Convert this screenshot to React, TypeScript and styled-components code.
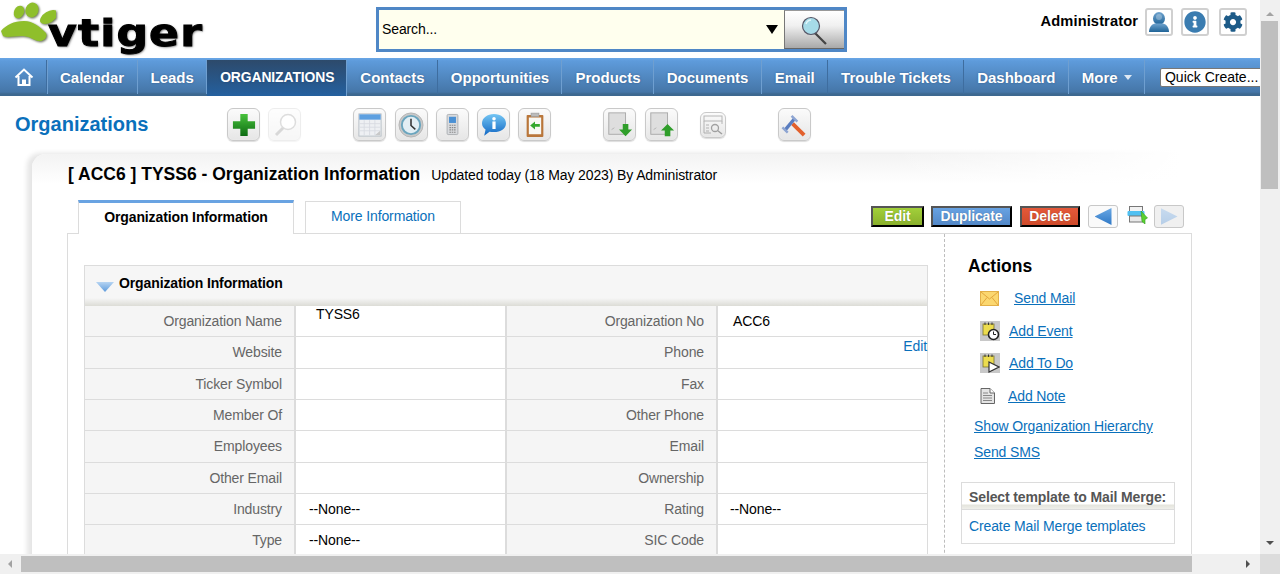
import React from 'react';
import styled, { createGlobalStyle } from 'styled-components';
import { FaCog, FaInfoCircle } from 'react-icons/fa';

const GlobalStyle = createGlobalStyle`
  html, body { margin: 0; padding: 0; height: 100%; overflow: hidden; background: #fff; }
  body { font-family: "Liberation Sans", Arial, sans-serif; font-size: 14px; letter-spacing: -0.12px; color: #000; }
  * { box-sizing: border-box; }
`;

const Shell = styled.div`
  display: grid;
  grid-template-columns: 1260px 20px;
  grid-template-rows: 554px 20px;
  width: 1280px;
  height: 574px;
  overflow: hidden;
`;

const Viewport = styled.div`
  overflow: hidden;
  background: #fff;
`;

const VTrack = styled.div`
  background: #f0f0f0;
  display: flex;
  flex-direction: column;
  align-items: center;
  padding: 0 2px 0 1px;
  position: relative;
`;

const VThumb = styled.div`
  width: 100%;
  height: 168px;
  background: #bfbfbf;
  margin-top: 5px;
`;

const HTrack = styled.div`
  background: #f0f0f0;
  display: flex;
  align-items: center;
  padding: 2px 0;
`;

const HThumb = styled.div`
  width: 1171px;
  height: 16px;
  background: #bfbfbf;
  margin-left: 9px;
`;

const Corner = styled.div`
  background: #dcdcdc;
`;

const Arrow = styled.span<{ $dir: 'up' | 'down' | 'left' | 'right'; $dark?: boolean }>`
  flex: none;
  width: 0;
  height: 0;
  border-style: solid;
  ${p => {
    const c = p.$dark ? '#505050' : '#a3a3a3';
    if (p.$dir === 'up') return `border-width: 0 4px 4px; border-color: transparent transparent ${c}; margin-top: 12px;`;
    if (p.$dir === 'down') return `border-width: 4px 4px 0; border-color: ${c} transparent transparent; position: absolute; bottom: 9px;`;
    if (p.$dir === 'left') return `border-width: 4px 4px 4px 0; border-color: transparent ${c} transparent transparent; margin-left: 8px;`;
    return `border-width: 4px 0 4px 4px; border-color: transparent transparent transparent ${c}; margin-left: 54px;`;
  }}
`;

const Header = styled.header`
  display: flex;
  height: 58px;
  padding-right: 13px;
`;

const Logo = styled.div`
  width: 376px;
  flex: none;
  display: flex;
  align-items: flex-start;
`;

const PawSvg = styled.svg`
  flex: none;
  filter: drop-shadow(1px 1px 1px rgba(40, 50, 20, 0.7)) blur(0.3px);
`;

const LogoWord = styled.span`
  font-family: "DejaVu Sans", sans-serif;
  font-weight: 700;
  font-size: 38px;
  line-height: 46px;
  letter-spacing: 1px;
  margin: 10px 0 0 -8px;
  color: #000;
  -webkit-text-stroke: 1px #000;
  text-shadow: 1px 1px 2px rgba(0, 0, 0, 0.55);
  transform: scaleX(1.16);
  transform-origin: left center;
`;

const SearchBox = styled.div`
  width: 471px;
  height: 45px;
  margin-top: 7px;
  border: 3px solid #4f87c6;
  background: #ffffee;
  display: flex;
  align-items: center;
`;

const SearchLabel = styled.span`
  flex: 1;
  padding: 0 0 1px 3px;
`;

const SearchCaret = styled.span`
  width: 0;
  height: 0;
  border-style: solid;
  border-width: 9px 6.5px 0;
  border-color: #000 transparent transparent;
  margin-right: 6px;
  margin-top: -1px;
`;

const SearchButton = styled.div`
  width: 60px;
  height: 39px;
  border-left: 1px solid #777;
  border-top: 1px solid #999;
  border-bottom: 1px solid #666;
  background: linear-gradient(#ffffff, #f0f0f0 40%, #a9a9a9);
  display: flex;
  align-items: center;
  justify-content: center;
`;

const UserArea = styled.div`
  margin-left: auto;
  display: flex;
  align-items: flex-start;
  padding-top: 8px;
`;

const UserName = styled.span`
  font-weight: 700;
  font-size: 14.67px;
  line-height: 26px;
  margin-right: 7px;
  letter-spacing: 0.1px;
`;

const UserIcon = styled.div<{ $gap?: number }>`
  width: 28px;
  height: 28px;
  border: 2px solid #d0d0d0;
  border-radius: 3px;
  margin-left: ${p => p.$gap ?? 0}px;
  display: flex;
  align-items: center;
  justify-content: center;
  background: #fff;
`;

const Nav = styled.nav`
  height: 38px;
  display: flex;
  align-items: stretch;
  overflow: hidden;
  background: linear-gradient(#69a6e6 0, #5e9bdb 3px, #4576a8 34px, #3d6890 36px, #3d6890 38px);
  padding-top: 2px;
  padding-bottom: 2px;
`;

const NavItem = styled.a<{ $active?: boolean; $dark?: boolean; $wide?: number }>`
  flex: none;
  display: flex;
  align-items: center;
  justify-content: center;
  padding: 0 12.3px 0 13px;
  ${p => p.$wide ? `width: ${p.$wide}px; padding: 0 0 0 1px; box-shadow: 1px 0 0 #6f9fd0;` : ''}
  font-weight: 700;
  font-size: 15px;
  letter-spacing: 0;
  color: #fff;
  text-shadow: 0 0 2px rgba(30, 60, 100, 0.55);
  border-right: 1px solid ${p => (p.$dark ? '#3e6d9f' : '#6f9fd0')};
  ${p => p.$active ? `
    background: linear-gradient(#2d4a6b, #24609f);
    margin-bottom: -2px;
    padding: 0 12px 2px 13px;
    font-size: 13.9px;
    letter-spacing: -0.1px;
    border-right-color: #6f9fd0;
  ` : ''}
`;

const MoreCaret = styled.span`
  width: 0;
  height: 0;
  margin-left: 6px;
  border-style: solid;
  border-width: 5px 4.5px 0;
  border-color: #dfe9f4 transparent transparent;
`;

const QuickCreate = styled.div`
  flex: none;
  margin: 8px 0 0 15px;
  width: 110px;
  height: 19px;
  background: #fff;
  border: 1px solid #777;
  border-radius: 2px;
  letter-spacing: 0;
  line-height: 17px;
  padding-left: 4px;
  white-space: nowrap;
`;

const TitleBar = styled.div`
  display: flex;
  align-items: center;
  height: 59px;
  padding: 0 0 0 15px;
`;

const ModuleTitle = styled.h1`
  margin: 0;
  width: 212px;
  flex: none;
  font-size: 20px;
  font-weight: 700;
  letter-spacing: 0;
  color: #0a70bb;
  position: relative;
  top: -1px;
`;

const Toolbar = styled.div`
  display: flex;
  gap: 52px;
  margin-top: -2px;
`;

const ToolGroup = styled.div`
  display: flex;
  align-items: center;
  gap: 8.25px;
`;

const ToolButton = styled.div<{ $faded?: boolean; $small?: boolean }>`
  width: ${p => (p.$small ? 26 : 33)}px;
  height: ${p => (p.$small ? 26 : 33)}px;
  ${p => (p.$small ? 'margin-left: 14px;' : '')}
  border: 1px solid #c9c9c9;
  border-radius: 6px;
  background: linear-gradient(#fbfbfb, #e6e6e6);
  box-shadow: inset 0 0 1px #fff, 0 1px 1px #ddd;
  display: flex;
  align-items: center;
  justify-content: center;
  opacity: ${p => (p.$faded ? 0.32 : 1)};

  svg {
    filter: blur(0.45px);
  }
`;

const Card = styled.section`
  position: relative;
  margin-left: 32px;
  width: 1190px;
  height: 500px;
  margin-top: -1px;
  padding: 0 0 0 35px;
  border-top-left-radius: 14px;
  background: linear-gradient(#f3f3f3, #fff 30px);
  box-shadow: -6px -2px 5px -1px #e6e6e6;
  display: flex;
  flex-direction: column;

  &::before {
    content: '';
    position: absolute;
    top: -10px;
    right: -10px;
    width: 340px;
    height: 44px;
    background: linear-gradient(to right, rgba(255, 255, 255, 0), #fff 85%);
  }
`;

const RecordTitle = styled.div`
  display: flex;
  align-items: baseline;
  height: 46px;
  padding: 10px 0 0 1px;
  flex: none;
`;

const RecordName = styled.h2`
  margin: 0;
  font-size: 17.5px;
  font-weight: 700;
  letter-spacing: 0;
`;

const RecordMeta = styled.span`
  margin-left: 11px;
  letter-spacing: -0.12px;
`;

const TabRow = styled.div`
  display: flex;
  align-items: flex-end;
  justify-content: space-between;
  padding: 0 8px 0 11px;
  width: 1125px;
  height: 34px;
  flex: none;
  position: relative;
  z-index: 1;
  margin-bottom: -1px;
`;

const Tabs = styled.div`
  display: flex;
  gap: 11px;
  align-items: flex-end;
`;

const Tab = styled.div<{ $active?: boolean }>`
  height: ${p => (p.$active ? 34 : 33)}px;
  width: ${p => (p.$active ? 216 : 156)}px;
  background: #fff;
  border: 1px solid #dcdcdc;
  border-bottom: ${p => (p.$active ? 'none' : '1px solid #dcdcdc')};
  border-top: ${p => (p.$active ? '3px solid #69a3e2' : '1px solid #dcdcdc')};
  display: flex;
  align-items: center;
  justify-content: center;
  font-weight: ${p => (p.$active ? 700 : 400)};
  color: ${p => (p.$active ? '#000' : '#0a70bb')};
  padding-bottom: ${p => (p.$active ? 4 : 3)}px;
`;

const RecordActions = styled.div`
  display: flex;
  align-items: center;
  padding-bottom: 6px;
`;

const toneColors = {
  green: ['#a2d03a', '#8ab02c'],
  blue: ['#68a2e2', '#5288c8'],
  red: ['#e4593a', '#cf4a2a'],
};

const ActionButton = styled.div<{ $tone: 'green' | 'blue' | 'red'; $width: number; $gap: number }>`
  width: ${p => p.$width}px;
  height: 21px;
  margin-right: ${p => p.$gap}px;
  border: 2px solid #000;
  border-left-color: #555;
  border-top-color: #555;
  background: linear-gradient(${p => toneColors[p.$tone][0]}, ${p => toneColors[p.$tone][1]});
  color: #fff;
  font-weight: 700;
  line-height: 16px;
  text-align: center;
  text-shadow: 0 0 1px rgba(0, 0, 0, 0.35);
`;

const PagerButton = styled.div<{ $faded?: boolean }>`
  width: 30px;
  height: 23px;
  border: 1px solid #c8c8c8;
  border-radius: 3px;
  background: ${p => (p.$faded ? '#f0f0f0' : '#fafafa')};
  display: flex;
  align-items: center;
  justify-content: center;
`;

const PagerArrow = styled.span<{ $dir: 'left' | 'right'; $faded?: boolean }>`
  width: 17px;
  height: 17px;
  background: ${p => (p.$faded ? 'linear-gradient(#c8dbef, #b6cee8)' : 'linear-gradient(#6aa8e4, #2f78c6)')};
  clip-path: ${p => (p.$dir === 'left' ? 'polygon(100% 0, 100% 100%, 0 50%)' : 'polygon(0 0, 0 100%, 100% 50%)')};
`;

const PrintSlot = styled.div`
  width: 21px;
  height: 18px;
  margin: -3px 6px 0 9px;

  svg {
    display: block;
    filter: blur(0.3px);
  }
`;

const ContentBox = styled.div`
  width: 1125px;
  flex: 1;
  border: 1px solid #dcdcdc;
  display: flex;
  background: #fff;
`;

const MainColumn = styled.div`
  width: 877px;
  flex: none;
  padding: 31px 0 0 16px;
  border-right: 1px dashed #bdbdbd;
`;

const BlockHeader = styled.div`
  width: 844px;
  height: 41px;
  border: 1px solid #dcdcdc;
  border-bottom: none;
  background: linear-gradient(#f6f6f6 32px, #dcdcd6 40px);
  display: flex;
  align-items: flex-start;
  padding: 9px 0 0 11px;
  font-weight: 700;
  line-height: 16px;
`;

const BlockCaret = styled.svg`
  margin: 7px 5px 0 0;
`;

const FieldGrid = styled.div`
  width: 844px;
  display: grid;
  grid-template-columns: 211px 211px 211px 209px;
  grid-auto-rows: 31.33px;
  border-left: 1px solid #dcdcdc;
  border-right: 1px solid #dcdcdc;
`;

const FieldLabel = styled.div`
  background: #f5f5f5;
  border-right: 2px solid #dcdcdc;
  border-bottom: 1px solid #dcdcdc;
  color: #666;
  display: flex;
  align-items: center;
  justify-content: flex-end;
  padding-right: 12px;
`;

const FieldValue = styled.div<{ $pad?: number; $raised?: boolean; $divided?: boolean }>`
  position: relative;
  border-bottom: 1px solid #dcdcdc;
  ${p => (p.$divided ? 'border-right: 2px solid #dcdcdc;' : '')}
  display: flex;
  align-items: ${p => (p.$raised ? 'flex-start' : 'center')};
  padding-left: ${p => p.$pad ?? 13}px;
`;

const InlineEdit = styled.a`
  position: absolute;
  right: 0;
  top: 1px;
  color: #0a70bb;
`;

const SideColumn = styled.aside`
  flex: 1;
  padding: 21px 0 0 16px;
`;

const SideTitle = styled.h3`
  margin: 0 0 5px 7px;
  font-size: 17.5px;
  font-weight: 700;
  letter-spacing: 0;
  line-height: 22px;
`;

const ActionRow = styled.div<{ $gap: number }>`
  display: flex;
  align-items: center;
  height: 32.45px;
  padding-left: 19px;
  gap: ${p => p.$gap}px;

  svg {
    flex: none;
    filter: blur(0.25px);
  }
`;

const ActionLink = styled.a`
  color: #0a70bb;
  text-decoration: underline;
`;

const PlainAction = styled.div<{ $height: number }>`
  height: ${p => p.$height}px;
  display: flex;
  align-items: center;
  padding-left: 13px;
`;

const MergeBox = styled.div`
  width: 214px;
  margin-top: 17px;
  border: 1px solid #dcdcdc;
`;

const MergeTitle = styled.div`
  height: 27px;
  padding: 6px 0 0 7px;
  font-weight: 700;
  line-height: 16px;
  color: #555;
  background: linear-gradient(#fff 21px, #e4e4dc 22px, #f2f2ee 27px);
  border-bottom: 1px solid #dcdcdc;
`;

const MergeLink = styled.div`
  height: 33px;
  padding-left: 7px;
  display: flex;
  align-items: center;
  color: #0a70bb;
`;

const Paw = () => (
  <PawSvg width="56" height="46" viewBox="0 0 56 46">
    <ellipse cx="19" cy="12" rx="5" ry="6.500" fill="#8fbf2b" transform="rotate(25 19 12)" />
    <ellipse cx="32" cy="10" rx="6.500" ry="7.500" fill="#8fbf2b" transform="rotate(20 32 10)" />
    <ellipse cx="49" cy="17" rx="10" ry="5.500" fill="#8fbf2b" transform="rotate(-32 49 17)" />
    <path d="M1 31C6 25 14 21 24 21C33 21 40 27 46 33C48 37 44 42 38 41C33 40 30 36 22 36C14 36 6 38 3 36Z" fill="#8fbf2b" />
  </PawSvg>
);

const MagnifierBig = () => (
  <svg width="28" height="30" viewBox="0 0 28 30">
    <line x1="14" y1="18" x2="25" y2="29" stroke="#444" strokeWidth="2.200" />
    <circle cx="10" cy="11" r="8.500" fill="#a6dbe8" stroke="#556" strokeWidth="1.200" />
    <path d="M5 9a6 6 0 0 1 5-4" stroke="#e4f6fa" strokeWidth="1.500" fill="none" />
  </svg>
);

const UserGlyph = () => (
  <svg width="22" height="22" viewBox="0 0 22 22">
    <defs>
      <linearGradient id="userFill" x1="0" y1="0" x2="0" y2="1">
        <stop offset="0" stopColor="#6fa3ce" />
        <stop offset="1" stopColor="#1f6397" />
      </linearGradient>
    </defs>
    <ellipse cx="11" cy="7.500" rx="6" ry="6.500" fill="url(#userFill)" />
    <path d="M1 21C1 15 5 12.500 8 12.500H14C17 12.500 21 15 21 21Z" fill="url(#userFill)" />
    <ellipse cx="11" cy="6" rx="3" ry="3" fill="#dfeaf3" opacity="0.35" />
  </svg>
);

const HomeGlyph = () => (
  <svg width="20" height="20" viewBox="0 0 20 20">
    <path d="M1.500 10.500L10 2.500L18.500 10.500M4.500 9V18H15.500V9" fill="none" stroke="#fff" strokeWidth="2" />
    <rect x="8" y="12.500" width="4" height="5.500" fill="#fff" />
  </svg>
);

const PlusGlyph = () => (
  <svg width="24" height="24" viewBox="0 0 26 26">
    <defs>
      <linearGradient id="plusFill" x1="0" y1="0" x2="0" y2="1">
        <stop offset="0" stopColor="#48c23c" />
        <stop offset="1" stopColor="#0d6b12" />
      </linearGradient>
    </defs>
    <path d="M9 1H17V9H25V17H17V25H9V17H1V9H9Z" fill="url(#plusFill)" />
  </svg>
);

const FadedLens = () => (
  <svg width="26" height="26" viewBox="0 0 26 26">
    <line x1="4" y1="23" x2="12" y2="15" stroke="#888" strokeWidth="3" />
    <circle cx="16" cy="10" r="7.500" fill="#fff" stroke="#999" strokeWidth="1.500" />
  </svg>
);

const CalendarGlyph = () => (
  <svg width="24" height="24" viewBox="0 0 27 27">
    <rect x="1" y="1" width="25" height="25" fill="#eef0f3" stroke="#b5bcc4" />
    <rect x="1.500" y="1.500" width="24" height="6" fill="#5d9fe0" />
    <path d="M2 12H25M2 16H25M2 20H25M7 8V25M13 8V25M19 8V25" stroke="#d8dbe2" strokeWidth="1" />
    <path d="M19 25L25 20V25Z" fill="#c8c8c8" />
  </svg>
);

const ClockGlyph = () => (
  <svg width="26" height="26" viewBox="0 0 27 27">
    <circle cx="13.500" cy="13.500" r="12.500" fill="#c9c9c9" stroke="#b4b4b4" />
    <circle cx="13.500" cy="13.500" r="9.500" fill="#e2eef4" stroke="#6aa5be" strokeWidth="2" />
    <path d="M13.500 7V14L18 18" stroke="#333" strokeWidth="1.600" fill="none" />
  </svg>
);

const PhoneGlyph = () => (
  <svg width="17" height="23" viewBox="0 0 22 28">
    <rect x="4" y="1" width="14" height="26" rx="1.500" fill="#d8dadd" stroke="#a0a4a8" />
    <rect x="6.500" y="4" width="9" height="8" fill="#4a90d4" />
    <path d="M7 15H9M10 15H12M13 15H15M7 18H9M10 18H12M13 18H15M7 21H9M10 21H12M13 21H15M7 24H9M10 24H12M13 24H15" stroke="#888" strokeWidth="1.400" />
  </svg>
);

const BubbleGlyph = () => (
  <svg width="26" height="24" viewBox="0 0 29 27">
    <defs>
      <linearGradient id="bubbleFill" x1="0" y1="0" x2="0" y2="1">
        <stop offset="0" stopColor="#74c6f4" />
        <stop offset="1" stopColor="#1268c4" />
      </linearGradient>
    </defs>
    <path d="M14.500 1C22 1 28 5.500 28 11.500C28 17.500 22 21.500 14.500 21.500C12.500 21.500 11 21.300 9.500 21L3.500 25.500L5 18.500C2.500 16.800 1 14.500 1 11.500C1 5.500 7 1 14.500 1Z" fill="url(#bubbleFill)" />
    <rect x="12.700" y="9.500" width="3.600" height="8.500" fill="#fff" />
    <circle cx="14.500" cy="6.500" r="2" fill="#fff" />
  </svg>
);

const ClipboardGlyph = () => (
  <svg width="22" height="26" viewBox="0 0 25 29">
    <rect x="3" y="3" width="19" height="25" rx="1" fill="#b9763a" />
    <rect x="5.500" y="6" width="14" height="19" fill="#f8f8f4" />
    <rect x="8" y="1" width="9" height="4" fill="#bbb" stroke="#999" strokeWidth="0.700" />
    <path d="M7 15L12.500 10.500V13.500H18V16.500H12.500V19.500Z" fill="#35a82e" />
  </svg>
);

const DocArrowGlyph = ({ up }: { up?: boolean }) => (
  <svg width="27" height="27" viewBox="0 0 29 29">
    <rect x="3" y="2" width="18" height="23" fill="#dedede" stroke="#a8a8a8" />
    <path d="M6 20L9 18" stroke="#b4b4b4" strokeWidth="1" />
    {up
      ? <path d="M21 14L28 21H24V27H18V21H14Z" fill="#2f9e2a" />
      : <path d="M18 14H24V20H28L21 27L14 20H18Z" fill="#2f9e2a" />}
  </svg>
);

const FindGlyph = () => (
  <svg width="22" height="22" viewBox="0 0 22 22" opacity="0.5">
    <rect x="2" y="2" width="18" height="5" fill="none" stroke="#777" />
    <path d="M2 7V19H9M20 7V10" stroke="#777" fill="none" />
    <path d="M4 11H7M4 14H7M4 17H7" stroke="#777" />
    <circle cx="13" cy="14" r="3.500" fill="none" stroke="#555" strokeWidth="1.300" />
    <line x1="15.500" y1="16.500" x2="20" y2="20" stroke="#555" strokeWidth="1.500" />
  </svg>
);

const HammerGlyph = () => (
  <svg width="28" height="28" viewBox="0 0 29 29">
    <path d="M13 13L25 25" stroke="#e2602c" strokeWidth="4" />
    <path d="M5 20L15 8" stroke="#5a7dc0" strokeWidth="3.500" />
    <path d="M2.500 17L8 22.500M12 5L18 11" stroke="#8ea5d2" strokeWidth="2.500" />
  </svg>
);

const PrintGlyph = () => (
  <svg width="21" height="18" viewBox="0 0 21 18">
    <rect x="2.500" y="0.500" width="13" height="5" fill="#f2f2f2" stroke="#777" />
    <rect x="0.500" y="5" width="17" height="5" rx="1" fill="#4fc0f2" />
    <rect x="2.500" y="10" width="13" height="6" fill="#e8e8e8" stroke="#777" />
    <path d="M14 5L20.500 12L18 13.500V18L15 15.500Z" fill="#5bd030" stroke="#2f9c22" strokeWidth="0.600" />
  </svg>
);

const MailGlyph = () => (
  <svg width="19" height="15" viewBox="0 0 19 15">
    <rect x="0.500" y="0.500" width="18" height="14" fill="#fbd76f" stroke="#e3b049" />
    <path d="M1 1L9.500 8L18 1M1 14L7 6.500M18 14L12 6.500" stroke="#e3a63d" fill="none" />
  </svg>
);

const PlannerGlyph = ({ play }: { play?: boolean }) => (
  <svg width="20" height="20" viewBox="0 0 20 20">
    <rect width="20" height="20" fill="#c8c8c8" />
    <rect x="3" y="3" width="11" height="11" fill="#ecdc4e" stroke="#7a7430" strokeWidth="0.800" />
    <path d="M5 1.500V4M8.500 1.500V4M12 1.500V4" stroke="#333" />
    {play
      ? <path d="M9 9L19 14L9 19Z" fill="#fff" stroke="#333" strokeWidth="1.200" />
      : <>
          <circle cx="13.500" cy="13.500" r="5" fill="#fff" stroke="#222" strokeWidth="1.600" />
          <path d="M13.500 10.500V13.500H16" stroke="#222" fill="none" />
        </>}
  </svg>
);

const NoteGlyph = () => (
  <svg width="15" height="16" viewBox="0 0 15 16">
    <path d="M1 .5H10L14.500 5V15.500H1Z" fill="#e4e4e4" stroke="#666" />
    <path d="M10 .5V5H14.500" fill="#fff" stroke="#666" />
    <path d="M3 5H8M3 7.500H12M3 10H12M3 12.500H12" stroke="#888" />
  </svg>
);

const navItems = [
  { label: 'Calendar' },
  { label: 'Leads', dark: false },
  { label: 'ORGANIZATIONS', active: true },
  { label: 'Contacts', dark: true },
  { label: 'Opportunities' },
  { label: 'Products' },
  { label: 'Documents' },
  { label: 'Email', dark: true },
  { label: 'Trouble Tickets', dark: true },
  { label: 'Dashboard' },
];

const fields: [string, string, string, string][] = [
  ['Organization Name', 'TYSS6', 'Organization No', 'ACC6'],
  ['Website', '', 'Phone', ''],
  ['Ticker Symbol', '', 'Fax', ''],
  ['Member Of', '', 'Other Phone', ''],
  ['Employees', '', 'Email', ''],
  ['Other Email', '', 'Ownership', ''],
  ['Industry', '--None--', 'Rating', '--None--'],
  ['Type', '--None--', 'SIC Code', ''],
];

export default function App() {
  return (
    <>
      <GlobalStyle />
      <Shell>
        <Viewport>
          <Header>
            <Logo>
              <Paw />
              <LogoWord>vtiger</LogoWord>
            </Logo>
            <SearchBox>
              <SearchLabel>Search...</SearchLabel>
              <SearchCaret />
              <SearchButton><MagnifierBig /></SearchButton>
            </SearchBox>
            <UserArea>
              <UserName>Administrator</UserName>
              <UserIcon><UserGlyph /></UserIcon>
              <UserIcon $gap={8}><FaInfoCircle size={22} color="#3a7cb0" /></UserIcon>
              <UserIcon $gap={10}><FaCog size={20} color="#1d5b88" /></UserIcon>
            </UserArea>
          </Header>

          <Nav>
            <NavItem $wide={47} $dark><HomeGlyph /></NavItem>
            {navItems.map(item => (
              <NavItem key={item.label} $active={item.active} $dark={item.dark}>{item.label}</NavItem>
            ))}
            <NavItem>More<MoreCaret /></NavItem>
            <QuickCreate>Quick Create...</QuickCreate>
          </Nav>

          <TitleBar>
            <ModuleTitle>Organizations</ModuleTitle>
            <Toolbar>
              <ToolGroup>
                <ToolButton><PlusGlyph /></ToolButton>
                <ToolButton $faded><FadedLens /></ToolButton>
              </ToolGroup>
              <ToolGroup>
                <ToolButton><CalendarGlyph /></ToolButton>
                <ToolButton><ClockGlyph /></ToolButton>
                <ToolButton><PhoneGlyph /></ToolButton>
                <ToolButton><BubbleGlyph /></ToolButton>
                <ToolButton><ClipboardGlyph /></ToolButton>
              </ToolGroup>
              <ToolGroup>
                <ToolButton><DocArrowGlyph /></ToolButton>
                <ToolButton><DocArrowGlyph up /></ToolButton>
                <ToolButton $small><FindGlyph /></ToolButton>
              </ToolGroup>
              <ToolGroup>
                <ToolButton><HammerGlyph /></ToolButton>
              </ToolGroup>
            </Toolbar>
          </TitleBar>

          <Card>
            <RecordTitle>
              <RecordName>[ ACC6 ] TYSS6 - Organization Information</RecordName>
              <RecordMeta>Updated today (18 May 2023) By Administrator</RecordMeta>
            </RecordTitle>
            <TabRow>
              <Tabs>
                <Tab $active>Organization Information</Tab>
                <Tab>More Information</Tab>
              </Tabs>
              <RecordActions>
                <ActionButton $tone="green" $width={53} $gap={7}>Edit</ActionButton>
                <ActionButton $tone="blue" $width={81} $gap={8}>Duplicate</ActionButton>
                <ActionButton $tone="red" $width={60} $gap={8}>Delete</ActionButton>
                <PagerButton><PagerArrow $dir="left" /></PagerButton>
                <PrintSlot><PrintGlyph /></PrintSlot>
                <PagerButton $faded><PagerArrow $dir="right" $faded /></PagerButton>
              </RecordActions>
            </TabRow>
            <ContentBox>
              <MainColumn>
                <BlockHeader>
                  <BlockCaret width="18" height="10" viewBox="0 0 18 10">
                    <defs>
                      <linearGradient id="caretFill" x1="0" y1="0" x2="0" y2="1">
                        <stop offset="0" stopColor="#b6d4f2" />
                        <stop offset="1" stopColor="#5d9bdc" />
                      </linearGradient>
                    </defs>
                    <path d="M0 0H18L9 10Z" fill="url(#caretFill)" />
                  </BlockCaret>
                  Organization Information
                </BlockHeader>
                <FieldGrid>
                  {fields.map((row, i) => (
                    <React.Fragment key={row[0]}>
                      <FieldLabel>{row[0]}</FieldLabel>
                      <FieldValue $divided $raised={i === 0} $pad={i === 0 ? 20 : 13}>{row[1]}</FieldValue>
                      <FieldLabel>{row[2]}</FieldLabel>
                      <FieldValue $pad={row[3] === 'ACC6' ? 15 : 12}>
                        {row[3]}
                        {row[2] === 'Phone' && <InlineEdit>Edit</InlineEdit>}
                      </FieldValue>
                    </React.Fragment>
                  ))}
                </FieldGrid>
              </MainColumn>
              <SideColumn>
                <SideTitle>Actions</SideTitle>
                <ActionRow $gap={15}><MailGlyph /><ActionLink>Send Mail</ActionLink></ActionRow>
                <ActionRow $gap={9}><PlannerGlyph /><ActionLink>Add Event</ActionLink></ActionRow>
                <ActionRow $gap={9}><PlannerGlyph play /><ActionLink>Add To Do</ActionLink></ActionRow>
                <ActionRow $gap={13}><NoteGlyph /><ActionLink>Add Note</ActionLink></ActionRow>
                <PlainAction $height={28}><ActionLink>Show Organization Hierarchy</ActionLink></PlainAction>
                <PlainAction $height={25}><ActionLink>Send SMS</ActionLink></PlainAction>
                <MergeBox>
                  <MergeTitle>Select template to Mail Merge:</MergeTitle>
                  <MergeLink>Create Mail Merge templates</MergeLink>
                </MergeBox>
              </SideColumn>
            </ContentBox>
          </Card>
        </Viewport>
        <VTrack>
          <Arrow $dir="up" />
          <VThumb />
          <Arrow $dir="down" $dark />
        </VTrack>
        <HTrack>
          <Arrow $dir="left" />
          <HThumb />
          <Arrow $dir="right" $dark />
        </HTrack>
        <Corner />
      </Shell>
    </>
  );
}
